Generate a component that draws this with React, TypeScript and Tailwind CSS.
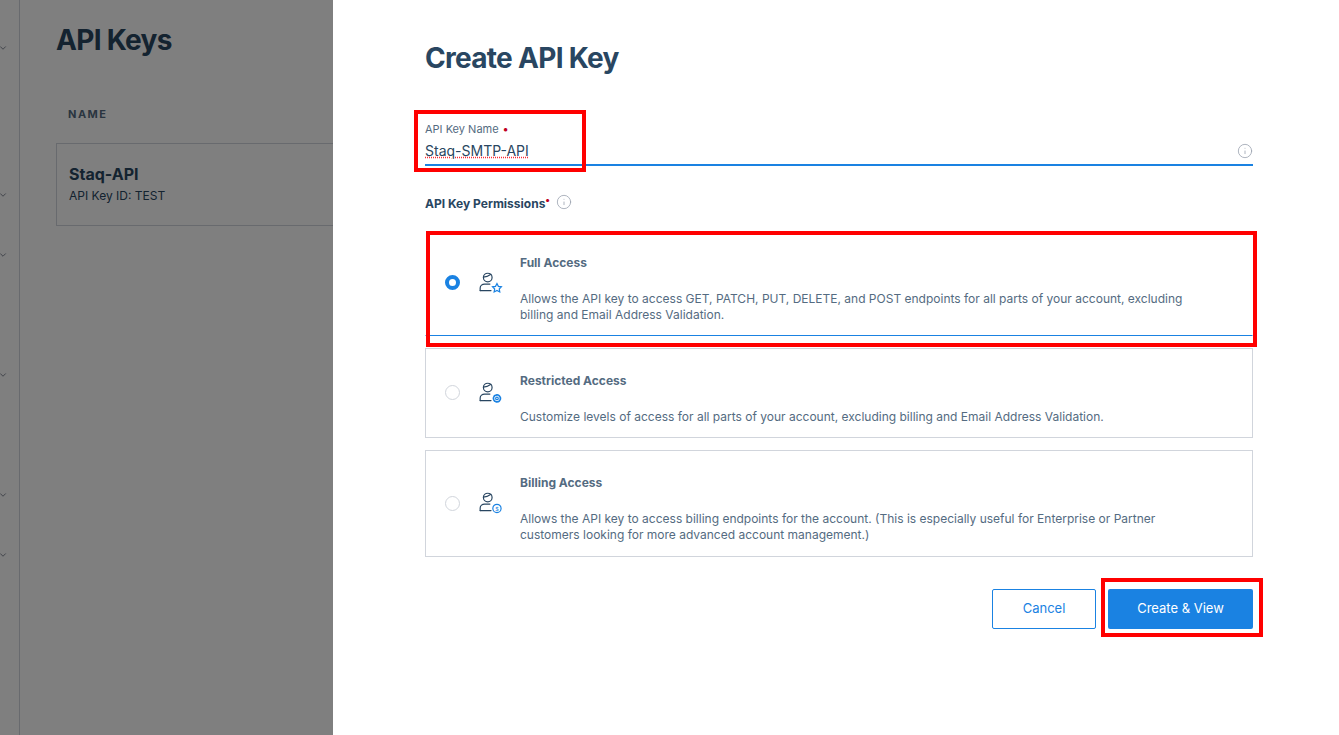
import { ChevronDown, Info } from "lucide-react"

const font = { fontFamily: "Inter, 'Noto Sans', sans-serif" }

function UserIcon({ badge }: { badge: "star" | "gear" | "dollar" }) {
  return (
    <svg width="26" height="26" viewBox="0 0 24 24" fill="none" strokeWidth="1.1" strokeLinecap="round">
      <circle cx="9" cy="7" r="4" stroke="#294661" />
      <path d="M5 6.5c2 0 5-1 7-2.5" stroke="#294661" />
      <path d="M2 19v-2.5c0-2 2-3.5 4-3.5h5" stroke="#294661" />
      <path d="M2 19h10" stroke="#294661" />
      {badge === "star" && (
        <path d="M17.5 12.5l1.3 2.6 2.8.4-2 2 .5 2.8-2.6-1.4-2.6 1.4.5-2.8-2-2 2.8-.4z" stroke="#1a82e2" />
      )}
      {badge === "gear" && (
        <>
          <circle cx="17.5" cy="17" r="3.2" stroke="#1a82e2" strokeWidth="1.6" strokeDasharray="1.3 1" />
          <circle cx="17.5" cy="17" r="1.2" stroke="#1a82e2" />
        </>
      )}
      {badge === "dollar" && (
        <>
          <circle cx="17.5" cy="17" r="3.8" stroke="#1a82e2" />
          <text x="17.5" y="19" fontSize="5" textAnchor="middle" fill="#1a82e2" fontFamily="Inter, sans-serif">$</text>
        </>
      )}
    </svg>
  )
}

const perms = [
  {
    title: "Full Access",
    desc: "Allows the API key to access GET, PATCH, PUT, DELETE, and POST endpoints for all parts of your account, excluding billing and Email Address Validation.",
    badge: "star" as const,
    selected: true,
    h: "h-[106px]",
  },
  {
    title: "Restricted Access",
    desc: "Customize levels of access for all parts of your account, excluding billing and Email Address Validation.",
    badge: "gear" as const,
    selected: false,
    h: "h-[90px]",
  },
  {
    title: "Billing Access",
    desc: "Allows the API key to access billing endpoints for the account. (This is especially useful for Enterprise or Partner customers looking for more advanced account management.)",
    badge: "dollar" as const,
    selected: false,
    h: "h-[107px]",
  },
]

export default function App() {
  return (
    <div className="flex w-[1339px] h-[735px] overflow-hidden bg-white" style={font}>
      {/* Dimmed page behind */}
      <div className="relative w-[333px] h-full shrink-0 bg-white">
        <div className="flex h-full">
          <div className="w-[20px] border-r border-gray-300 relative">
            {[43, 190, 250, 370, 490, 550].map((t) => (
              <ChevronDown key={t} className="absolute left-[-2px] w-[10px] h-[10px] text-gray-500" style={{ top: t }} />
            ))}
          </div>
          <div className="flex-1 pl-[36px] pt-[22px]">
            <h1 className="text-[28px] font-bold text-[#294661] tracking-tight leading-9">API Keys</h1>
            <div className="mt-[48px] pl-[12px] text-[11px] font-bold tracking-[1.5px] text-[#546b81]">NAME</div>
            <div className="mt-[20px] h-[83px] border border-gray-300 border-r-0 pl-[12px] pt-[18px]">
              <div className="text-[16px] font-bold text-[#294661]">Staq-API</div>
              <div className="text-[12px] text-[#294661] mt-[1px]">API Key ID: TEST</div>
            </div>
          </div>
        </div>
        <div className="absolute inset-0 bg-black/50" />
      </div>

      {/* Panel */}
      <div className="relative flex-1 pl-[92px] pr-[86px] pt-[40px]">
        <h2 className="text-[28px] font-bold text-[#294661] tracking-tight leading-9">Create API Key</h2>

        <div className="mt-[45px] border-b-2 border-[#1a82e2] pb-[3px] flex items-end justify-between">
          <div>
            <div className="text-[11px] text-[#546b81] flex gap-[4px]">API Key Name <span className="text-[#c0001e]">•</span></div>
            <div className="mt-[2px] text-[14px] text-[#294661] underline decoration-dotted decoration-red-500">Staq-SMTP-API</div>
          </div>
          <Info className="w-[16px] h-[16px] text-gray-400 mb-[2px]" strokeWidth={1.2} />
        </div>

        <div className="mt-[26px] flex items-center gap-[6px] text-[12px] font-bold text-[#294661]">
          <span>API Key Permissions<span className="text-[#c0001e] align-super text-[10px]">•</span></span>
          <Info className="w-[16px] h-[16px] text-gray-400" strokeWidth={1.2} />
        </div>

        <div className="mt-[17px] flex flex-col gap-[12px]">
          {perms.map((p) => (
            <div
              key={p.title}
              className={`${p.h} flex border ${p.selected ? "border-transparent border-b-[#1a82e2]" : "border-gray-300"}`}
            >
              <div className="w-[52px] flex items-center justify-center">
                {p.selected ? (
                  <div className="w-[15px] h-[15px] rounded-full border-[4px] border-[#1a82e2] bg-white" />
                ) : (
                  <div className="w-[15px] h-[15px] rounded-full border border-gray-300" />
                )}
              </div>
              <div className="w-[42px] flex items-center">
                <UserIcon badge={p.badge} />
              </div>
              <div className="flex-1 pt-[23px] pr-[40px]">
                <div className="text-[12px] font-bold text-[#546b81]">{p.title}</div>
                <p className="mt-[19px] text-[12px] leading-[16px] text-[#546b81]">{p.desc}</p>
              </div>
            </div>
          ))}
        </div>

        <div className="mt-[32px] flex justify-end gap-[12px]">
          <button className="w-[104px] h-[40px] border border-[#1a82e2] rounded-[2px] text-[13px] text-[#1a82e2] bg-white">Cancel</button>
          <button className="w-[145px] h-[40px] rounded-[2px] text-[13px] text-white bg-[#1a82e2]">Create &amp; View</button>
        </div>

        {/* Red annotation boxes */}
        <div className="absolute left-[81px] top-[110px] w-[172px] h-[62px] border-[4px] border-[#ff0000]" />
        <div className="absolute left-[93px] top-[231px] w-[831px] h-[116px] border-[4px] border-[#ff0000]" />
        <div className="absolute left-[768px] top-[578px] w-[162px] h-[59px] border-[4px] border-[#ff0000]" />
      </div>
    </div>
  )
}
